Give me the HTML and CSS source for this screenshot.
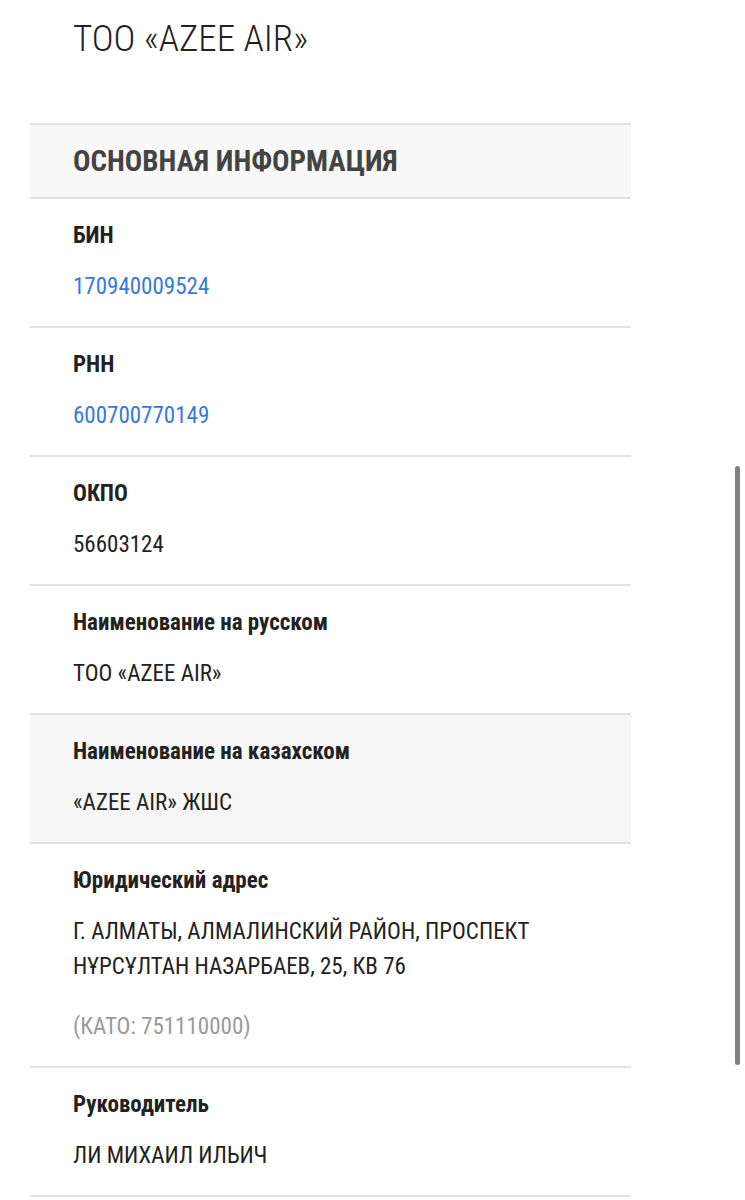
FILE: index.html
```html
<!DOCTYPE html>
<html lang="ru">
<head>
<meta charset="utf-8">
<title>ТОО «AZEE AIR»</title>
<link rel="stylesheet" href="styles.css">
</head>
<body>
<div class="page">
  <h1 class="title">ТОО «AZEE AIR»</h1>
  <section class="card">
    <h2 class="card-head">ОСНОВНАЯ ИНФОРМАЦИЯ</h2>
    <div class="row">
      <div class="label">БИН</div>
      <div class="value link">170940009524</div>
    </div>
    <div class="row">
      <div class="label">РНН</div>
      <div class="value link">600700770149</div>
    </div>
    <div class="row">
      <div class="label">ОКПО</div>
      <div class="value">56603124</div>
    </div>
    <div class="row">
      <div class="label">Наименование на русском</div>
      <div class="value">ТОО «AZEE AIR»</div>
    </div>
    <div class="row row-alt">
      <div class="label">Наименование на казахском</div>
      <div class="value">«AZEE AIR» ЖШС</div>
    </div>
    <div class="row">
      <div class="label">Юридический адрес</div>
      <div class="value">Г. АЛМАТЫ, АЛМАЛИНСКИЙ РАЙОН, ПРОСПЕКТ НҰРСҰЛТАН НАЗАРБАЕВ, 25, КВ 76</div>
      <div class="value muted">(КАТО: 751110000)</div>
    </div>
    <div class="row">
      <div class="label">Руководитель</div>
      <div class="value">ЛИ МИХАИЛ ИЛЬИЧ</div>
    </div>
  </section>
</div>
<div class="scrollbar"></div>
</body>
</html>
```
FILE: styles.css
```css
html, body {
  margin: 0;
  padding: 0;
  background: #ffffff;
}
body {
  font-family: Roboto, "Noto Sans", sans-serif;
  font-stretch: 80%;
  color: #222222;
  width: 745px;
  height: 1200px;
  overflow: hidden;
  position: relative;
}
.page {
  width: 601px;
  margin-left: 30px;
  padding-top: 17px;
}
.title {
  margin: 0 0 63px;
  padding-left: 43px;
  font-size: 37px;
  line-height: 43px;
  font-weight: 300;
  color: #222222;
}
.card {
  display: flex;
  flex-direction: column;
}
.card-head {
  margin: 0;
  padding: 0 43px;
  height: 72px;
  display: flex;
  align-items: center;
  background: #f8f8f8;
  border-top: 2px solid #e2e2e2;
  border-bottom: 2px solid #e2e2e2;
  font-size: 29px;
  font-weight: 700;
  color: #444444;
}
.row {
  padding: 22px 43px 22px;
  border-bottom: 2px solid #e2e2e2;
  display: flex;
  flex-direction: column;
}
.row-alt {
  background: #f6f6f6;
}
.label {
  font-size: 23px;
  line-height: 30px;
  font-weight: 700;
  color: #222222;
  margin-bottom: 18px;
}
.value {
  font-size: 23px;
  line-height: 35px;
  font-weight: 400;
  color: #222222;
}
.link {
  color: #3679e0;
}
.muted {
  color: #9a9a9a;
  margin-top: 25px;
}
.scrollbar {
  position: absolute;
  left: 735px;
  top: 466px;
  width: 5px;
  height: 599px;
  border-radius: 3px;
  background: #7f7f7f;
}
```
